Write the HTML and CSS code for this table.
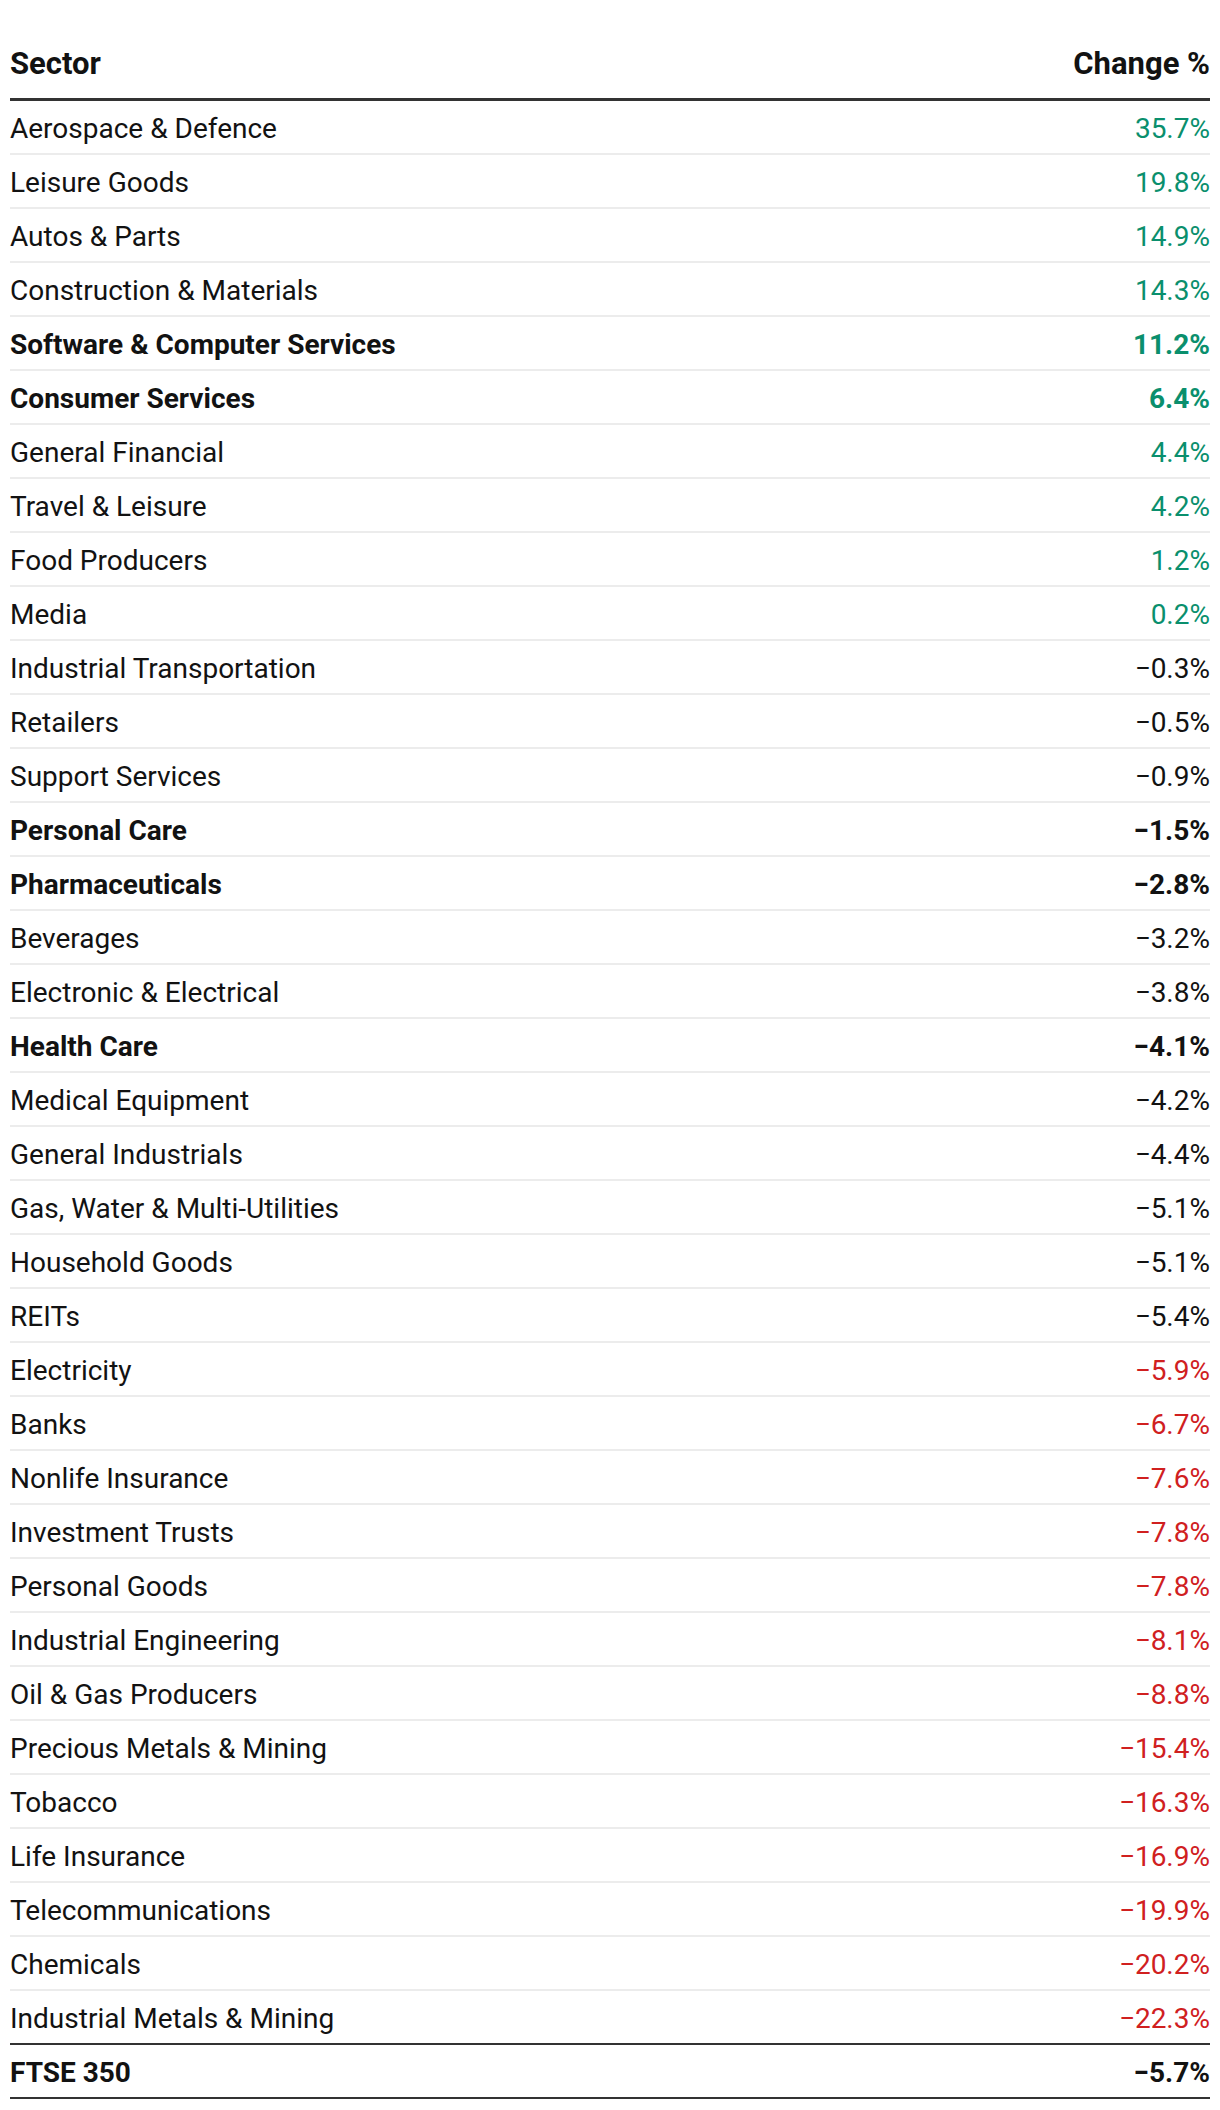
FILE: index.html
```html
<!DOCTYPE html>
<html lang="en">
<head>
<meta charset="utf-8">
<title>Sector performance</title>
<link rel="stylesheet" href="styles.css">
</head>
<body>
<table class="sectors">
  <thead>
    <tr><th class="name">Sector</th><th class="val">Change %</th></tr>
  </thead>
  <tbody>
    <tr><td class="name">Aerospace &amp; Defence</td><td class="val up">35.7%</td></tr>
    <tr><td class="name">Leisure Goods</td><td class="val up">19.8%</td></tr>
    <tr><td class="name">Autos &amp; Parts</td><td class="val up">14.9%</td></tr>
    <tr><td class="name">Construction &amp; Materials</td><td class="val up">14.3%</td></tr>
    <tr class="bold"><td class="name">Software &amp; Computer Services</td><td class="val up">11.2%</td></tr>
    <tr class="bold"><td class="name">Consumer Services</td><td class="val up">6.4%</td></tr>
    <tr><td class="name">General Financial</td><td class="val up">4.4%</td></tr>
    <tr><td class="name">Travel &amp; Leisure</td><td class="val up">4.2%</td></tr>
    <tr><td class="name">Food Producers</td><td class="val up">1.2%</td></tr>
    <tr><td class="name">Media</td><td class="val up">0.2%</td></tr>
    <tr><td class="name">Industrial Transportation</td><td class="val">−0.3%</td></tr>
    <tr><td class="name">Retailers</td><td class="val">−0.5%</td></tr>
    <tr><td class="name">Support Services</td><td class="val">−0.9%</td></tr>
    <tr class="bold"><td class="name">Personal Care</td><td class="val">−1.5%</td></tr>
    <tr class="bold"><td class="name">Pharmaceuticals</td><td class="val">−2.8%</td></tr>
    <tr><td class="name">Beverages</td><td class="val">−3.2%</td></tr>
    <tr><td class="name">Electronic &amp; Electrical</td><td class="val">−3.8%</td></tr>
    <tr class="bold"><td class="name">Health Care</td><td class="val">−4.1%</td></tr>
    <tr><td class="name">Medical Equipment</td><td class="val">−4.2%</td></tr>
    <tr><td class="name">General Industrials</td><td class="val">−4.4%</td></tr>
    <tr><td class="name">Gas, Water &amp; Multi-Utilities</td><td class="val">−5.1%</td></tr>
    <tr><td class="name">Household Goods</td><td class="val">−5.1%</td></tr>
    <tr><td class="name">REITs</td><td class="val">−5.4%</td></tr>
    <tr><td class="name">Electricity</td><td class="val down">−5.9%</td></tr>
    <tr><td class="name">Banks</td><td class="val down">−6.7%</td></tr>
    <tr><td class="name">Nonlife Insurance</td><td class="val down">−7.6%</td></tr>
    <tr><td class="name">Investment Trusts</td><td class="val down">−7.8%</td></tr>
    <tr><td class="name">Personal Goods</td><td class="val down">−7.8%</td></tr>
    <tr><td class="name">Industrial Engineering</td><td class="val down">−8.1%</td></tr>
    <tr><td class="name">Oil &amp; Gas Producers</td><td class="val down">−8.8%</td></tr>
    <tr><td class="name">Precious Metals &amp; Mining</td><td class="val down">−15.4%</td></tr>
    <tr><td class="name">Tobacco</td><td class="val down">−16.3%</td></tr>
    <tr><td class="name">Life Insurance</td><td class="val down">−16.9%</td></tr>
    <tr><td class="name">Telecommunications</td><td class="val down">−19.9%</td></tr>
    <tr><td class="name">Chemicals</td><td class="val down">−20.2%</td></tr>
    <tr class="last"><td class="name">Industrial Metals &amp; Mining</td><td class="val down">−22.3%</td></tr>
  </tbody>
  <tfoot>
    <tr class="bold"><td class="name">FTSE 350</td><td class="val">−5.7%</td></tr>
  </tfoot>
</table>
</body>
</html>
```
FILE: styles.css
```css
html, body {
  margin: 0;
  padding: 0;
  background: #ffffff;
}

body {
  padding: 0 10px;
  font-family: Roboto, "Liberation Sans", Arial, sans-serif;
  color: #121212;
}

.sectors {
  width: 1200px;
  border-collapse: separate;
  border-spacing: 0;
}

.sectors th {
  font-size: 31px;
  font-weight: 700;
  line-height: 30px;
  padding: 49px 0 19px;
  border-bottom: 3px solid #333333;
}

.sectors td {
  font-size: 28px;
  line-height: 28px;
  padding: 14px 0 10px;
  border-bottom: 2px solid #ececec;
}

.sectors .name {
  text-align: left;
}

.sectors .val {
  text-align: right;
}

.sectors tr.bold td {
  font-weight: 700;
}

.sectors tr.last td {
  border-bottom-color: #333333;
}

.sectors tfoot td {
  border-bottom-color: #333333;
}

.up {
  color: #0a8f6d;
}

.down {
  color: #d0201f;
}
```
